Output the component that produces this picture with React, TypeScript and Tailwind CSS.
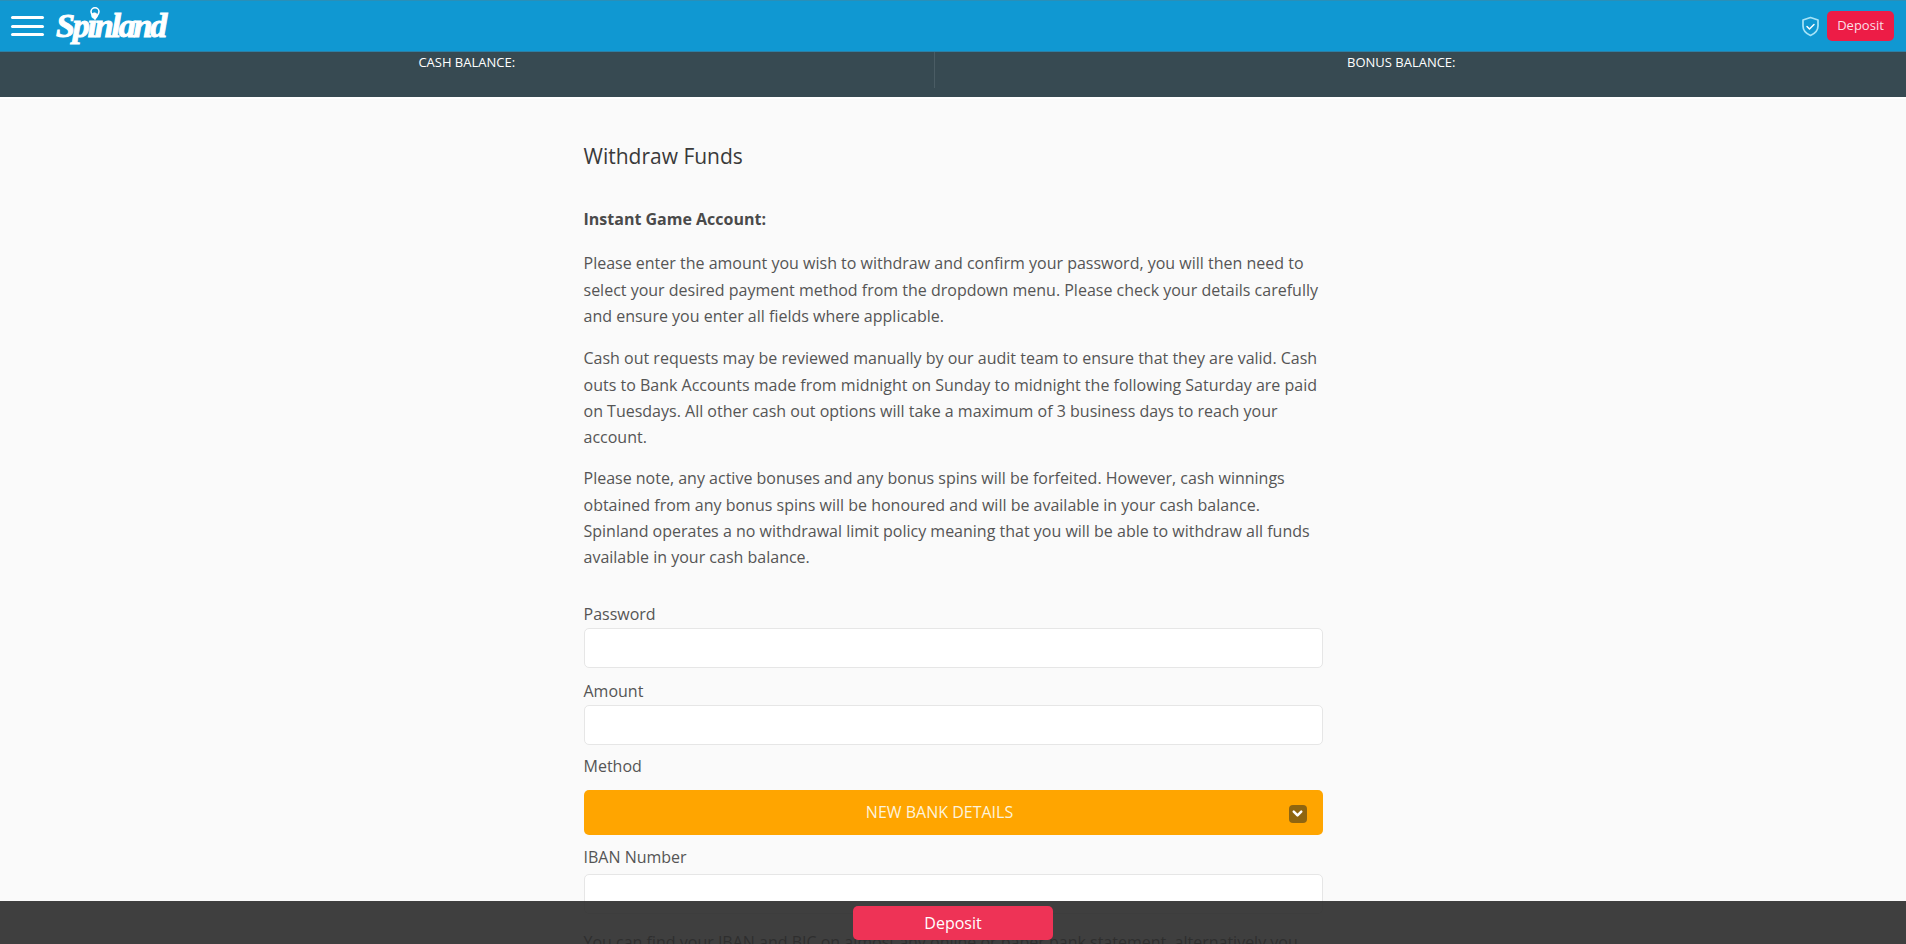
import React from 'react';
import { ChevronDown } from 'lucide-react';

const paragraphs = [
  [
    'Please enter the amount you wish to withdraw and confirm your password, you will then need to',
    'select your desired payment method from the dropdown menu. Please check your details carefully',
    'and ensure you enter all fields where applicable.',
  ],
  [
    'Cash out requests may be reviewed manually by our audit team to ensure that they are valid. Cash',
    'outs to Bank Accounts made from midnight on Sunday to midnight the following Saturday are paid',
    'on Tuesdays. All other cash out options will take a maximum of 3 business days to reach your',
    'account.',
  ],
  [
    'Please note, any active bonuses and any bonus spins will be forfeited. However, cash winnings',
    'obtained from any bonus spins will be honoured and will be available in your cash balance.',
    'Spinland operates a no withdrawal limit policy meaning that you will be able to withdraw all funds',
    'available in your cash balance.',
  ],
];

const Field = ({ label }: { label: string }) => (
  <div>
    <label className="block text-[16px] leading-[26px] text-[#555555]">{label}</label>
    <div className="mt-[1px] h-[40px] rounded-[5px] border border-[#e6e6e6] bg-white"></div>
  </div>
);

const App = () => {
  return (
    <div className="h-screen overflow-hidden bg-[#fafafa] font-['Open_Sans',sans-serif]">
      {/* Top header */}
      <header className="flex h-[52px] items-center justify-between border-t border-b border-t-[#2a8fb8] border-b-[#2c7fa5] bg-[#1098d2] pl-[11px] pr-[12px]">
        <div className="flex items-center">
          <div className="flex w-[33px] flex-col gap-[5.5px]">
            <span className="h-[3px] rounded-full bg-white"></span>
            <span className="h-[3px] rounded-full bg-white"></span>
            <span className="h-[3px] rounded-full bg-white"></span>
          </div>
          <div className="relative ml-[12px]">
            <span className="font-['Liberation_Serif',serif] text-[34px] font-bold italic leading-[40px] tracking-[-2.2px] text-white [-webkit-text-stroke:1px_white]">Spinland</span>
            <svg className="absolute left-[34px] top-[1px] h-[13px] w-[10px]" viewBox="0 0 10 13" fill="none">
              <path d="M5 12C3 9 1 7 1 4.8a4 4 0 018 0C9 7 7 9 5 12z" stroke="white" strokeWidth="1.6" />
            </svg>
          </div>
        </div>
        <div className="flex items-center gap-[7px]">
          <svg className="h-[21px] w-[19px]" viewBox="0 0 19 21" fill="none">
            <path d="M9.5 1.5l7.5 2.5v6c0 4.5-3.2 7.6-7.5 9.5C5.2 17.6 2 14.5 2 10V4z" stroke="#a5e3f7" strokeWidth="1.7" strokeLinejoin="round" />
            <path d="M6 10.5l2.5 2.5 4.5-4.5" stroke="white" strokeWidth="1.5" strokeLinecap="round" strokeLinejoin="round" />
          </svg>
          <button className="flex h-[30px] w-[67px] items-center justify-center rounded-[5px] bg-[#ed1c46] text-[13px] text-[#fbdfe5]">Deposit</button>
        </div>
      </header>

      {/* Balance strip */}
      <div className="h-[47px] border-b-2 border-white bg-[#374a52]">
        <div className="flex w-[1868px]">
          <div className="flex h-[36px] flex-1 justify-center border-r border-[#4a5c64] pt-[1px]">
            <span className="text-[13px] leading-[18px] text-white">CASH BALANCE:</span>
          </div>
          <div className="flex flex-1 justify-center pt-[1px]">
            <span className="text-[13px] leading-[18px] text-white">BONUS BALANCE:</span>
          </div>
        </div>
      </div>

      {/* Withdraw form */}
      <main className="mx-auto w-[739px] pt-[40px]">
        <h1 className="text-[21px] leading-[34px] text-[#3a3a3a]">Withdraw Funds</h1>
        <p className="mt-[33px] text-[16px] font-bold leading-[26.4px] text-[#4a4a4a]">Instant Game Account:</p>
        <p className="mt-[18px] whitespace-nowrap text-[16px] leading-[26.4px] text-[#555555]">
          {paragraphs[0].map((line) => (
            <span key={line} className="block">{line}</span>
          ))}
        </p>
        <p className="mt-[15.5px] whitespace-nowrap text-[16px] leading-[26.4px] text-[#555555]">
          {paragraphs[1].map((line) => (
            <span key={line} className="block">{line}</span>
          ))}
        </p>
        <p className="mt-[14.5px] whitespace-nowrap text-[16px] leading-[26.4px] text-[#555555]">
          {paragraphs[2].map((line) => (
            <span key={line} className="block">{line}</span>
          ))}
        </p>

        <div className="mt-[30px]">
          <Field label="Password" />
          <div className="mt-[10px]">
            <Field label="Amount" />
          </div>
          <label className="mt-[8px] block text-[16px] leading-[26px] text-[#555555]">Method</label>
          <button className="relative mt-[11px] flex h-[45px] w-full items-center justify-center rounded-[5px] bg-[#ffa500] pr-[27px] text-[16px] text-[#fdf3dc]">
            NEW BANK DETAILS
            <span className="absolute right-[16px] top-[15px] flex h-[18px] w-[18px] items-center justify-center rounded-[4px] bg-[#8f6510]">
              <ChevronDown className="h-[15px] w-[15px] text-white" strokeWidth={4} />
            </span>
          </button>
          <label className="mt-[9px] block text-[16px] leading-[26px] text-[#555555]">IBAN Number</label>
          <div className="mt-[4px] h-[40px] rounded-[5px] border border-[#e6e6e6] bg-white"></div>
          <p className="mt-[15px] whitespace-nowrap text-[16px] leading-[26.4px] text-[#555555]">
            You can find your IBAN and BIC on almost any online or paper bank statement, alternatively you
          </p>
        </div>
      </main>

      {/* Sticky deposit bar */}
      <div className="fixed bottom-0 left-0 right-0 flex h-[43px] justify-center bg-[#2a2a2a]/90">
        <button className="mt-[5px] h-[34px] w-[200px] rounded-[5px] bg-[#ee3356] text-[16px] text-white">Deposit</button>
      </div>
    </div>
  );
};

export default App;
